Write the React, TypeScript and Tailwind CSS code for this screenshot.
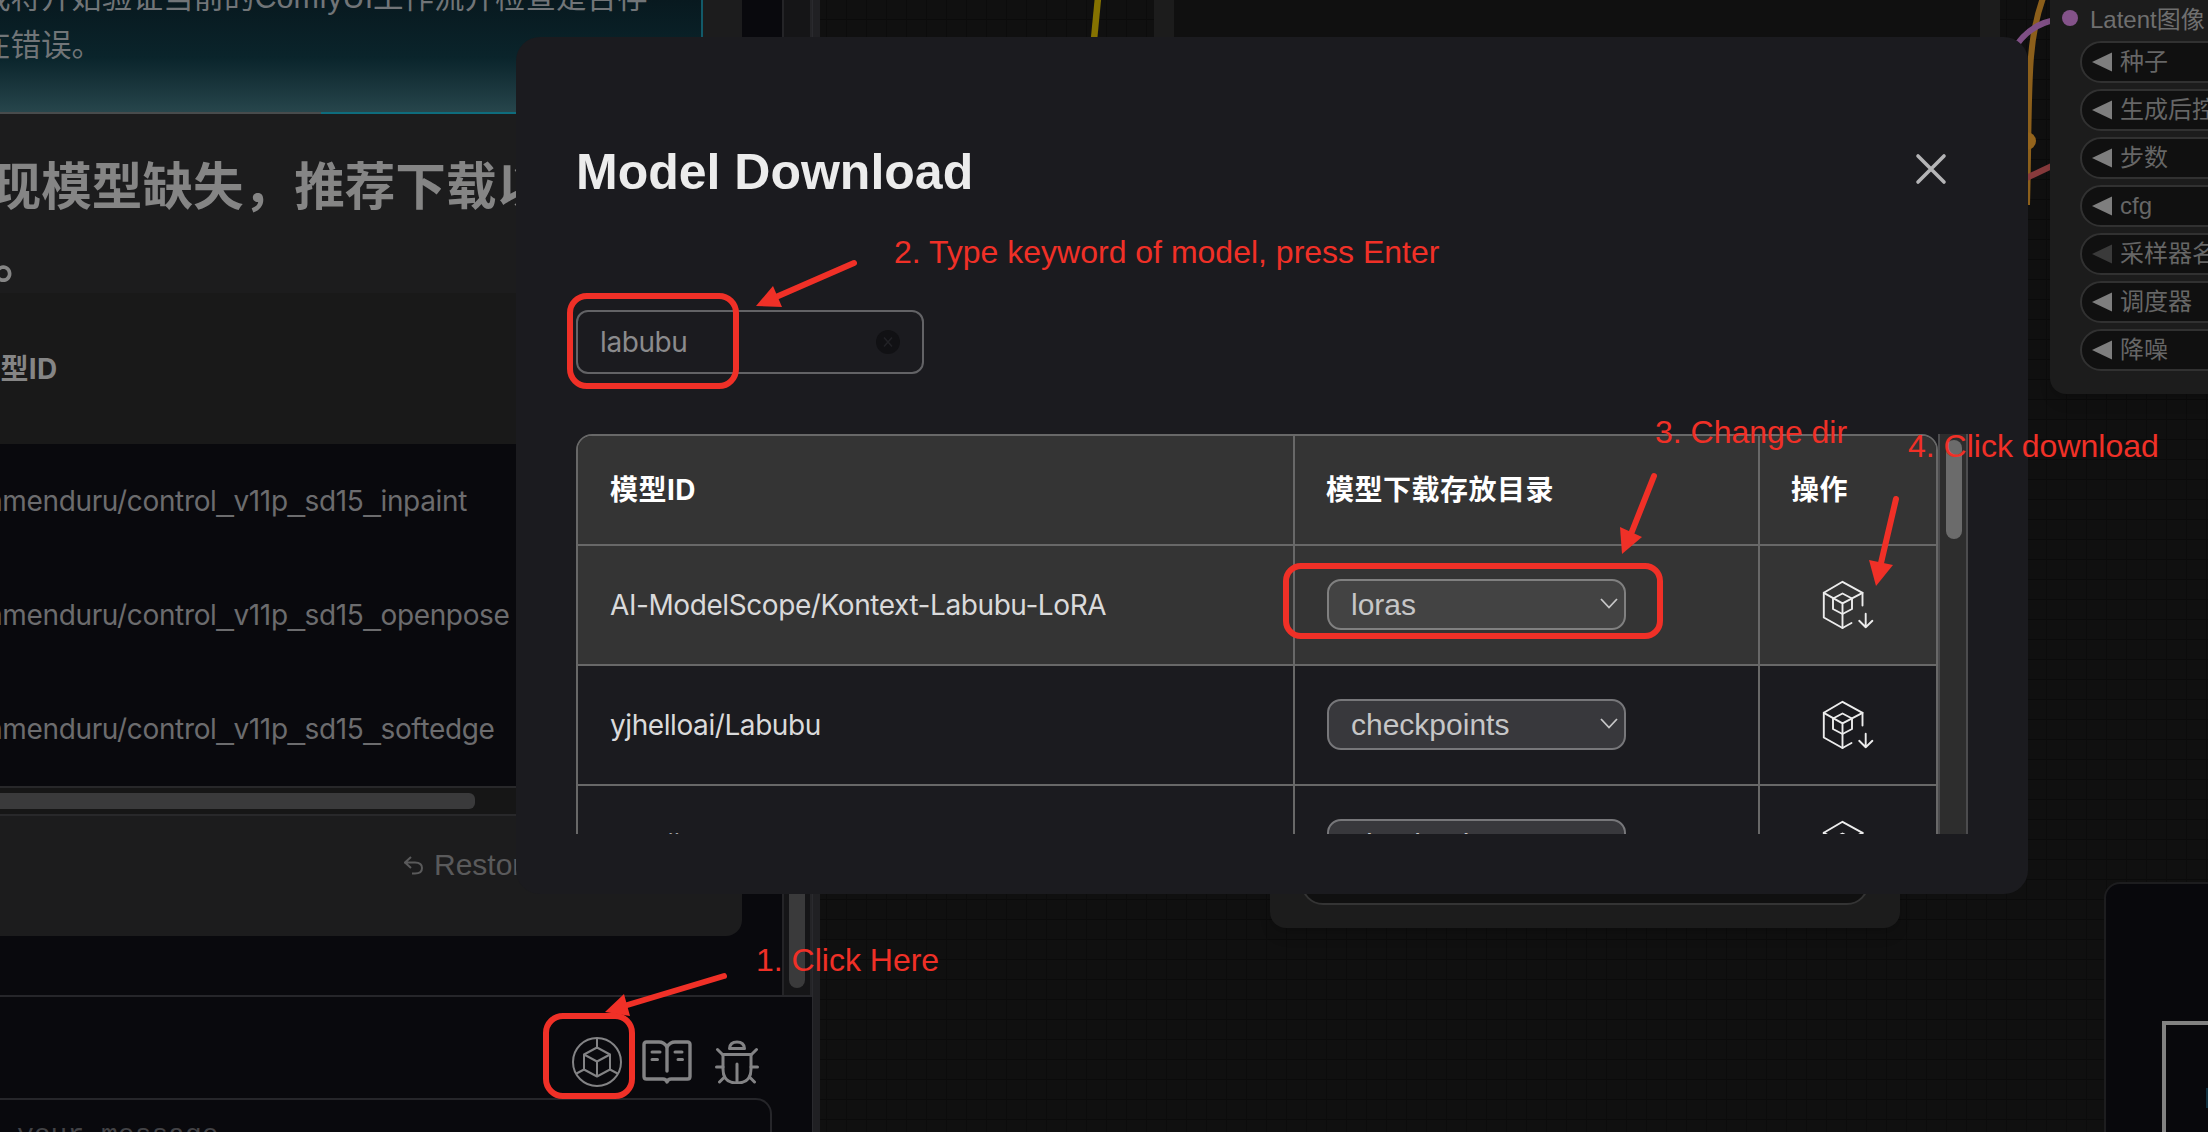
import React from "react";

const MISSING = [
  "camenduru/control_v11p_sd15_inpaint",
  "camenduru/control_v11p_sd15_openpose",
  "camenduru/control_v11p_sd15_softedge",
];

const ROWS = [
  { id: "AI-ModelScope/Kontext-Labubu-LoRA", dir: "loras", active: true },
  { id: "yjhelloai/Labubu", dir: "checkpoints", active: false },
  { id: "modiig", dir: "checkpoints", active: false },
];

const WIDGETS = [
  { label: "种子", dim: false },
  { label: "生成后控制", dim: false },
  { label: "步数", dim: false },
  { label: "cfg", dim: false },
  { label: "采样器名称", dim: true },
  { label: "调度器", dim: false },
  { label: "降噪", dim: false },
];

function CubeCircleIcon() {
  return (
    <svg width="50" height="50" viewBox="0 0 50 50" fill="none" stroke="currentColor" strokeWidth="2" strokeLinejoin="round">
      <circle cx="25" cy="25" r="24" />
      <path d="M25 10.500 38 17.500V32.500L25 39.500 12 32.500V17.500Z" />
      <path d="M12 17.500 25 24.500 38 17.500M25 24.500V39.500M25 1V10.500M12 32.500 4.500 36.500M38 32.500 45.500 36.500" />
    </svg>
  );
}

function BookIcon() {
  return (
    <svg width="50" height="44" viewBox="0 0 50 44" fill="none" stroke="currentColor" strokeWidth="3.400" strokeLinejoin="round" strokeLinecap="round">
      <path d="M25 7Q22 2 17 2H4.500Q2 2 2 4.500V36.500Q2 39 4.500 39H21Q24 39 25 42Q26 39 29 39H45.500Q48 39 48 36.500V4.500Q48 2 45.500 2H33Q28 2 25 7Z" />
      <path d="M25 7V31" />
      <path d="M10 12H18M10 19.500H15.500M33 12H40M36 19.500H40.500" strokeWidth="3" />
    </svg>
  );
}

function BugIcon() {
  return (
    <svg width="44" height="44" viewBox="0 0 44 44" fill="none" stroke="currentColor" strokeWidth="3" strokeLinejoin="round" strokeLinecap="round">
      <path d="M14.500 8.500Q15 2 22 2T29.500 8.500Z" />
      <path d="M8 14.500H36V29Q36 43 22 43T8 29Z" />
      <path d="M22 24V42M2.500 9.500 7.500 14.500M41.500 9.500 36.500 14.500M1.500 27H8M36 27H42.500M9.500 37 4.500 42M34.500 37 39.500 42" />
    </svg>
  );
}

function ModelDownloadIcon() {
  return (
    <svg width="52" height="50" viewBox="-1 -1 52 50" fill="none" stroke="currentColor" strokeWidth="1.900" strokeLinejoin="round" strokeLinecap="round">
      <path d="M39.500 24.500V11.800L19.500 .800 .800 11.800V36.500L19.500 47 28.500 42" />
      <path d="M.800 11.800 19.500 22.300 39.500 11.800M19.500 22.300V47" />
      <path d="M19.500 12.500 29 17.500V28L19.500 33 10 28V17.500Z" />
      <path d="M42.700 32.700V46.200M36.200 39.800 42.700 46.200 49.400 39.800" />
    </svg>
  );
}

function ModelName({ name }: { name: string }) {
  return (
    <span className="ml-[-29px] whitespace-nowrap">
      {name.split("_").map((part, i) => (
        <React.Fragment key={i}>
          {i > 0 && <span className="font-['Liberation_Sans',sans-serif] text-[31px]">_</span>}
          {part}
        </React.Fragment>
      ))}
    </span>
  );
}

function ChatPanel() {
  return (
    <aside className="relative flex h-full w-[820px] shrink-0 bg-[#09090d]">
      <div className="flex w-[812px] flex-col">
        <div className="flex h-[995px] shrink-0 justify-between">
          <div className="flex h-[936px] w-[742px] flex-col rounded-br-2xl bg-[#1c1c1d]">
            <div className="h-[114px] w-[703px] shrink-0 overflow-hidden border-r-2 border-[#125a69] bg-linear-to-b from-[#08191f] via-[#0a242b] via-50% to-[#28474d]">
              <p className="ml-[-20px] mt-[-27px] h-[138px] w-[800px] font-['Liberation_Sans','Noto_Sans_CJK_SC',sans-serif] text-[30.500px] leading-[48px] text-[#717578]">
                我将开始验证当前的ComfyUI工作流并检查是否存
                <br />
                在错误。
              </p>
            </div>
            <div className="-mt-[2px] flex h-[2px] w-[703px] shrink-0">
              <div className="w-[321px] bg-[#484b4c]" />
              <div className="flex-1 bg-[#0e6c7d]" />
            </div>
            <h2 className="ml-[-60px] mt-[36px] h-[143px] shrink-0 whitespace-nowrap text-[50.600px] font-bold leading-[73px] text-[#858585]">
              发现模型缺失，推荐下载以
              <br />
              <span className="ml-[3px]">型。</span>
            </h2>
            <div className="flex h-[151px] shrink-0 items-center bg-[#191919] text-[28px] font-bold tracking-[0.400px] text-[#858585]">
              <span className="ml-[-28px]">模型ID</span>
            </div>
            <div className="flex h-[342px] shrink-0 flex-col bg-[#09090d]">
              {MISSING.map((m) => (
                <div key={m} className="flex h-[114px] items-center text-[28px] tracking-[-0.350px] text-[#6c6c6e]">
                  <ModelName name={m} />
                </div>
              ))}
            </div>
            <div className="flex h-[30px] shrink-0 items-center border-y-2 border-[#28282a] bg-[#161616]">
              <div className="h-4 w-[475px] rounded-r-md bg-[#3a3a3b]" />
            </div>
            <div className="flex items-center gap-[11px] pl-[404px] pt-[28px] font-['Liberation_Sans',sans-serif] text-[30px] leading-[42px] text-[#5a5a5b]">
              <svg width="19" height="22" viewBox="0 0 19 22" fill="none" stroke="currentColor" strokeWidth="2">
                <path d="M7 3 1 8.500H11Q18 8.500 18 14T11 19.500H8M7 14 1 8.500" />
              </svg>
              Restore
            </div>
          </div>
          <div className="flex w-[30px] items-end justify-center border-x-2 border-[#242427] bg-[#151517] pb-[7px]">
            <div className="h-[900px] w-4 rounded-full bg-[#3a3a3b]" />
          </div>
        </div>
        <div className="flex flex-1 flex-col border-t-2 border-[#26262a]">
          <div className="flex h-[101px] shrink-0 items-center justify-end pr-[53px] pt-[29px] text-[#838385]">
            <div className="flex h-[50px] items-center">
              <CubeCircleIcon />
              <div className="ml-[20px]"><BookIcon /></div>
              <div className="ml-[23px]"><BugIcon /></div>
            </div>
          </div>
          <div className="h-[80px] w-[772px] shrink-0 rounded-tr-2xl border-r-2 border-t-2 border-[#26262a] pt-[18px]">
            <div className="ml-[-67px] whitespace-pre font-['Liberation_Mono',monospace] text-[28px] leading-[36px] text-[#434346]">Type your message...</div>
          </div>
        </div>
      </div>
      <div className="w-2 border-l border-[#2a2a2e] bg-[#202023]" />
    </aside>
  );
}

function GraphCanvas() {
  return (
    <main className="relative flex-1 overflow-hidden bg-[#101010] bg-[linear-gradient(to_right,#0c0c0c_1px,transparent_1px),linear-gradient(to_bottom,#0b0b0b_1px,transparent_1px)] bg-[size:20px_20px] bg-[position:6px_19px]">
      <div className="absolute left-[334px] top-[-40px] h-[400px] w-[846px] border-x-[20px] border-[#1c1c1c] bg-[#101010]" />
      <svg className="absolute left-0 top-0" width="1388" height="420" fill="none">
        <path d="M278 -2 272 60" stroke="#857200" strokeWidth="6.500" />
        <path d="M1223 -2C1206 45 1210 90 1207 205" stroke="#8c5f1b" strokeWidth="6" />
        <circle cx="1207" cy="141" r="9" fill="#94641c" />
        <path d="M1192 52Q1208 24 1236 20" stroke="#7f4f85" strokeWidth="6" />
        <path d="M1200 181 1236 164" stroke="#873a3c" strokeWidth="6" />
      </svg>
      <div className="absolute left-[1230px] top-[-30px] flex h-[424px] w-[400px] flex-col rounded-2xl bg-[#1c1c1c] pt-[30px] font-['Liberation_Sans','Noto_Sans_CJK_SC',sans-serif] shadow-lg">
        <div className="flex h-[41px] items-start gap-[12px] pl-[12px] text-[24px] leading-[40px] text-[#6f6f6f]">
          <span className="mt-[10px] size-4 rounded-full bg-[#84538a]" />
          Latent图像
        </div>
        <div className="flex flex-col gap-[6px] pl-[30px]">
          {WIDGETS.map((w) => (
            <div key={w.label} className="flex h-[42px] items-center gap-2 whitespace-nowrap rounded-l-full border-2 border-[#313131] bg-[#101010] pl-[10px] text-[24px] text-[#666666]">
              <svg width="20" height="20" viewBox="0 0 20 20" className={w.dim ? "text-[#3a3a3a]" : "text-[#7e7e7e]"}>
                <path d="M0 10 20 .5V19.500Z" fill="currentColor" />
              </svg>
              {w.label}
            </div>
          ))}
        </div>
      </div>
      <div className="absolute left-[450px] top-[780px] flex h-[148px] w-[630px] rounded-2xl bg-[#1c1c1c] px-[31px] pb-[23px] shadow-lg">
        <div className="flex-1 rounded-[22px] border-2 border-[#343434] bg-[#101010]" />
      </div>
      <div className="absolute left-[1284px] top-[882px] h-[300px] w-[200px] rounded-2xl border-2 border-[#1d1d1f] bg-[#08080c] pl-[56px] pt-[137px]">
        <div className="h-[200px] border-4 border-[#828282]" />
      </div>
      <div className="absolute left-[1386px] top-[1088px] h-[20px] w-[4px] bg-[#12303f]" />
    </main>
  );
}

function DirSelect({ value, active }: { value: string; active: boolean }) {
  return (
    <div
      className={
        "mb-[2px] flex h-[51px] w-[299px] items-center justify-between rounded-[14px] border-2 pl-[22px] pr-[5px] font-['Liberation_Sans',sans-serif] text-[30px] text-[#c6c6c7] " +
        (active ? "border-[#808080] bg-[#434343]" : "border-[#77777a] bg-[#38383c]")
      }
    >
      {value}
      <svg width="20" height="14" viewBox="0 0 20 14" fill="none" stroke="currentColor" strokeWidth="1.800">
        <path d="M2 2 10 10.500 18 2" />
      </svg>
    </div>
  );
}

function ModelDialog() {
  return (
    <section className="absolute left-[516px] top-[37px] flex h-[857px] w-[1512px] flex-col rounded-3xl bg-[#1b1b1f] pl-[60px]">
      <header className="flex h-[155px] shrink-0 items-start justify-between pr-[81px] pt-[102px]">
        <h1 className="mt-[-1px] font-['Liberation_Sans',sans-serif] text-[50px] font-bold leading-[68px] text-[#ececec]">Model Download</h1>
        <svg className="mt-[14px]" width="32" height="32" viewBox="0 0 32 32" fill="none" stroke="#b4b4b6" strokeWidth="3.600" strokeLinecap="round">
          <path d="M3 3 29 29M29 3 3 29" />
        </svg>
      </header>
      <div className="mt-[118px] flex h-[64px] w-[348px] shrink-0 items-center justify-between rounded-xl border-2 border-[#636366] pl-[22px] pr-[22px]">
        <span className="text-[28px] tracking-[-0.400px] text-[#8b8b8d]">labubu</span>
        <svg width="24" height="24" viewBox="0 0 24 24" fill="none">
          <circle cx="12" cy="12" r="12" fill="#111114" />
          <path d="M8 7.500 16 16.500M16 7.500 8 16.500" stroke="#222226" strokeWidth="1.500" />
        </svg>
      </div>
      <div className="mt-[60px] flex h-[400px] w-[1392px] shrink-0 overflow-hidden">
        <div className="h-[600px] w-[1362px] shrink-0 overflow-hidden rounded-tl-2xl rounded-tr-2xl border-2 border-[#686868] text-[28px]">
          <div className="grid h-[110px] grid-cols-[717px_465px_1fr] border-b-2 border-[#686868] bg-[#343434] font-bold tracking-[0.500px] text-white">
            <div className="flex items-center border-r-2 border-[#686868] pl-8">模型ID</div>
            <div className="flex items-center border-r-2 border-[#686868] pl-[31px]">模型下载存放目录</div>
            <div className="flex items-center pl-[31px]">操作</div>
          </div>
          {ROWS.map((r) => (
            <div
              key={r.id}
              className={
                "grid h-[120px] grid-cols-[717px_465px_1fr] border-b-2 border-[#686868] text-[#dadadb] " +
                (r.active ? "bg-[#343434]" : "bg-[#1b1b1f]")
              }
            >
              <div className="flex items-center border-r-2 border-[#686868] pl-8 tracking-[-0.420px]">{r.id}</div>
              <div className="flex items-center border-r-2 border-[#686868] pl-8">
                <DirSelect value={r.dir} active={r.active} />
              </div>
              <div className="flex items-center pl-[62px] text-[#ececec]">
                <ModelDownloadIcon />
              </div>
            </div>
          ))}
        </div>
        <div className="flex w-[30px] border-x-2 border-[#4c4c4e] bg-[#2d2d2d] pl-[6px] pt-[6px]">
          <div className="h-[99px] w-4 rounded-full bg-[#6b6b6b]" />
        </div>
      </div>
    </section>
  );
}

function Arrow({ tail, neck, head }: { tail: string; neck: string; head: string }) {
  return (
    <g>
      <path d={"M" + tail + "L" + neck} stroke="#f03027" strokeWidth="6" strokeLinecap="round" />
      <path d={"M" + head + "Z"} fill="#f03027" />
    </g>
  );
}

function Annotations() {
  return (
    <div className="absolute inset-0 whitespace-nowrap font-['Liberation_Sans',sans-serif] text-[32px] leading-[36px] text-[#f03027]">
      <div className="absolute left-[543px] top-[1013px] h-[86px] w-[92px] rounded-[20px] border-[6px] border-[#f03027]" />
      <div className="absolute left-[567px] top-[293px] h-[96px] w-[172px] rounded-[20px] border-[6px] border-[#f03027]" />
      <div className="absolute left-[1283px] top-[563px] h-[76px] w-[380px] rounded-[18px] border-[6px] border-[#f03027]" />
      <svg className="absolute inset-0" width="2208" height="1132" fill="none">
        <Arrow tail="724 976" neck="624 1006" head="605 1012L624 994L630 1016" />
        <Arrow tail="854 263" neck="776 297" head="756 306L773 286L782 307" />
        <Arrow tail="1654 476" neck="1631 534" head="1622 554L1620 527L1642 537" />
        <Arrow tail="1896 499" neck="1881 563" head="1876 586L1869 560L1893 565" />
      </svg>
      <span className="absolute left-[756px] top-[942px]">1. Click Here</span>
      <span className="absolute left-[894px] top-[234px]">2. Type keyword of model, press Enter</span>
      <span className="absolute left-[1655px] top-[414px]">3. Change dir</span>
      <span className="absolute left-[1908px] top-[428px]">4. Click download</span>
    </div>
  );
}

export default function App() {
  return (
    <div className="relative flex h-[1132px] w-[2208px] overflow-hidden bg-[#101010] font-['Inter','Noto_Sans_CJK_SC',sans-serif]">
      <ChatPanel />
      <GraphCanvas />
      <ModelDialog />
      <Annotations />
    </div>
  );
}
